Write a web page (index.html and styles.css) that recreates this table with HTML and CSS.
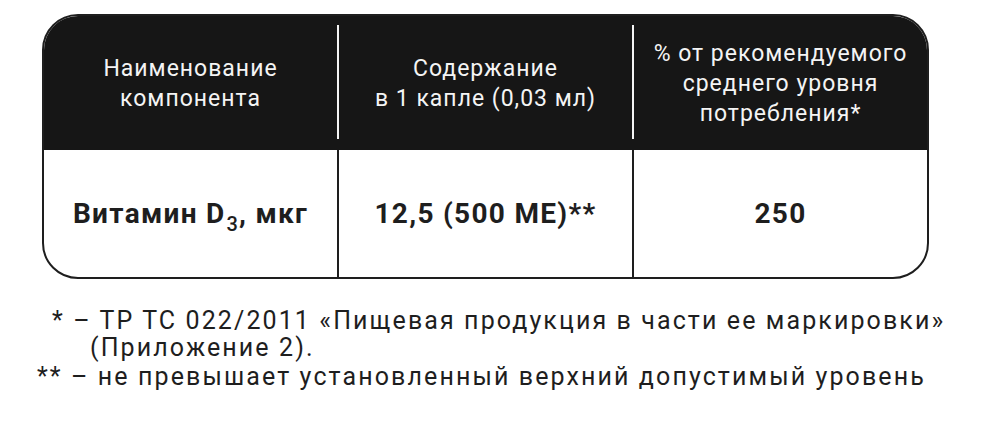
FILE: index.html
```html
<!DOCTYPE html>
<html lang="ru">
<head>
<meta charset="utf-8">
<link rel="stylesheet" href="styles.css">
</head>
<body>
<div class="table">
  <div class="head">
    <div class="hcell">Наименование<br>компонента</div>
    <div class="hdiv"></div>
    <div class="hcell">Содержание<br>в 1 капле (0,03 мл)</div>
    <div class="hdiv"></div>
    <div class="hcell">% от рекомендуемого<br>среднего уровня<br>потребления*</div>
  </div>
  <div class="row">
    <div class="cell"><span>Витамин D<sub class="sub">3</sub>, мкг</span></div>
    <div class="bdiv"></div>
    <div class="cell">12,5 (500 МЕ)**</div>
    <div class="bdiv"></div>
    <div class="cell">250</div>
  </div>
</div>
<div class="notes">
  <p class="note note-one">* – ТР ТС 022/2011 «Пищевая продукция в части ее маркировки»<br>(Приложение 2).</p>
  <p class="note note-two">** – не превышает установленный верхний допустимый уровень</p>
</div>
</body>
</html>
```
FILE: styles.css
```css
html, body {
  margin: 0;
  padding: 0;
  background: #ffffff;
}
body {
  font-family: Roboto, "Noto Sans", sans-serif;
  color: #1e1e1e;
}
.table {
  margin: 14px 0 0 42px;
  width: 887px;
  box-sizing: border-box;
  border: 2px solid #1e1e1e;
  border-radius: 36px;
  overflow: hidden;
}
.head {
  display: flex;
  height: 134px;
  background: #161616;
}
.hcell {
  flex: 1;
  display: flex;
  align-items: center;
  justify-content: center;
  text-align: center;
  color: #f4f4f4;
  font-size: 23px;
  line-height: 30px;
  letter-spacing: 1px;
  padding-top: 2px;
}
.hdiv {
  width: 2px;
  margin: 9px 0 11px;
  background: #f4f4f4;
}
.row {
  display: flex;
  height: 127px;
}
.cell {
  flex: 1;
  display: flex;
  align-items: center;
  justify-content: center;
  font-size: 28px;
  font-weight: 700;
  letter-spacing: 1.3px;
  color: #1e1e1e;
}
.bdiv {
  width: 2px;
  background: #1e1e1e;
}
.sub {
  font-size: 20px;
  font-weight: 500;
  vertical-align: -8px;
  line-height: 0;
  letter-spacing: 0;
  margin: 0 1px 0 1px;
}
.notes {
  margin-top: 28px;
}
.note {
  margin: 0;
  font-size: 25px;
  line-height: 27px;
  letter-spacing: 2.1px;
  color: #1e1e1e;
}
.note-one {
  padding-left: 90px;
  text-indent: -38px;
}
.note-two {
  padding-left: 37px;
  margin-top: 2px;
}
```
